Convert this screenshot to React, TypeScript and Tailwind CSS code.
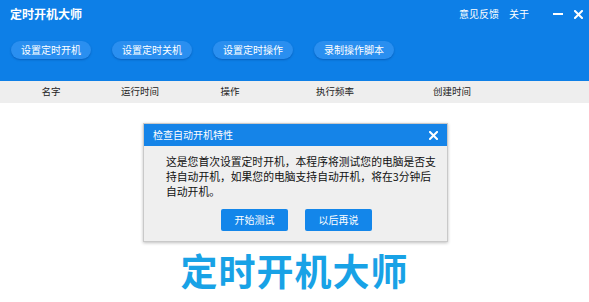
import React from "react";

const font = { fontFamily: '"Noto Sans CJK SC", "Noto Sans", sans-serif' };

export default function App() {
  const buttons = ["设置定时开机", "设置定时关机", "设置定时操作", "录制操作脚本"];
  const cols = ["名字", "运行时间", "操作", "执行频率", "创建时间"];
  return (
    <div className="relative w-[589px] h-[302px] overflow-hidden bg-white" style={font}>
      <div className="h-[81px] bg-[#0d7fe7] flex flex-col">
        <div className="flex items-center h-[28px] pl-[10px] pr-[6px]">
          <div className="text-white text-[12px] font-bold leading-none">定时开机大师</div>
          <div className="ml-auto flex items-center text-white text-[10px] leading-none">
            <span className="mr-[10px]">意见反馈</span>
            <span>关于</span>
            <span className="ml-[24px] w-[10px] h-[2px] bg-white"></span>
            <svg className="ml-[11px]" width="9" height="9" viewBox="0 0 9 9">
              <path d="M1 1 L8 8 M8 1 L1 8" stroke="white" strokeWidth="2" strokeLinecap="square" />
            </svg>
          </div>
        </div>
        <div className="flex gap-[21px] pl-[11px] mt-[13px]">
          {buttons.map((b) => (
            <div
              key={b}
              className="w-[80px] h-[18px] rounded-full bg-[#2a8ff0] shadow-[0_1px_2px_rgba(0,60,140,0.45)] text-white text-[10px] flex items-center justify-center leading-none"
            >
              {b}
            </div>
          ))}
        </div>
      </div>
      <div className="h-[22px] bg-[#eeeeee] grid grid-cols-[102px_76px_104px_106px_128px] items-center text-[9.5px] text-[#222]">
        {cols.map((c) => (
          <div key={c} className="text-center leading-none">{c}</div>
        ))}
      </div>
      <div className="flex justify-center mt-[149px]">
        <div className="text-[37px] leading-none font-bold text-[#18a2e6] tracking-[1px]">定时开机大师</div>
      </div>

      <div className="absolute left-[143px] top-[123px] w-[305px] h-[119px] bg-[#efefef] border border-[#c9c9c9] shadow-[0_1px_3px_rgba(0,0,0,0.25)] flex flex-col">
        <div className="h-[22px] bg-[#1584e8] flex items-center pl-[9px] pr-[9px]">
          <span className="text-white text-[10px] leading-none">检查自动开机特性</span>
          <svg className="ml-auto" width="9" height="9" viewBox="0 0 9 9">
            <path d="M1 1 L8 8 M8 1 L1 8" stroke="white" strokeWidth="2" strokeLinecap="square" />
          </svg>
        </div>
        <div className="pl-[22px] pt-[8px] text-[10.8px] leading-[15px] text-[#111] whitespace-nowrap">
          <div>这是您首次设置定时开机，本程序将测试您的电脑是否支</div>
          <div>持自动开机，如果您的电脑支持自动开机，将在3分钟后</div>
          <div>自动开机。</div>
        </div>
        <div className="flex justify-center gap-[17px] mt-[10px] pl-[2px]">
          <div className="w-[67px] h-[22px] bg-[#1386ea] rounded-[2px] text-white text-[10px] flex items-center justify-center leading-none">开始测试</div>
          <div className="w-[67px] h-[22px] bg-[#1386ea] rounded-[2px] text-white text-[10px] flex items-center justify-center leading-none">以后再说</div>
        </div>
      </div>
    </div>
  );
}
